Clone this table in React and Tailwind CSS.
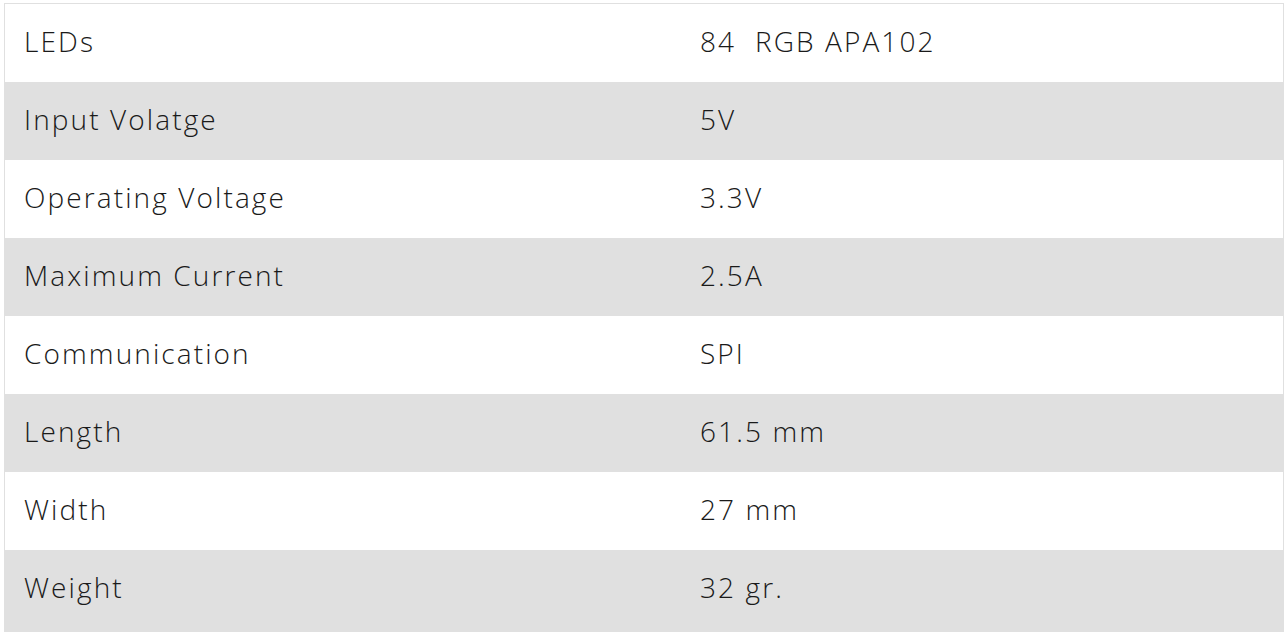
const specs = [
  ["LEDs", "84  RGB APA102"],
  ["Input Volatge", "5V"],
  ["Operating Voltage", "3.3V"],
  ["Maximum Current", "2.5A"],
  ["Communication", "SPI"],
  ["Length", "61.5 mm"],
  ["Width", "27 mm"],
  ["Weight", "32 gr."],
];

export default function App() {
  return (
    <div className="w-[1287px] h-[632px] overflow-hidden bg-white pt-[3px] pl-[4px] flex">
      <div className="w-[1280px] flex flex-col border-t border-l border-r border-[#e0e0e0] font-['Open_Sans',sans-serif] font-light text-[28px] leading-[38px] tracking-[0.075em] text-[#1a1a1a]">
        {specs.map(([label, value], i) => (
          <div
            key={label}
            className={`grid grid-cols-[676px_1fr] shrink-0 h-[78px] pt-[18px] last:h-auto last:grow ${
              i % 2 === 1 ? "bg-[#e0e0e0]" : "bg-white"
            }`}
          >
            <div className="pl-[19px]">{label}</div>
            <div className="pl-[19px] whitespace-pre">{value}</div>
          </div>
        ))}
      </div>
    </div>
  );
}
